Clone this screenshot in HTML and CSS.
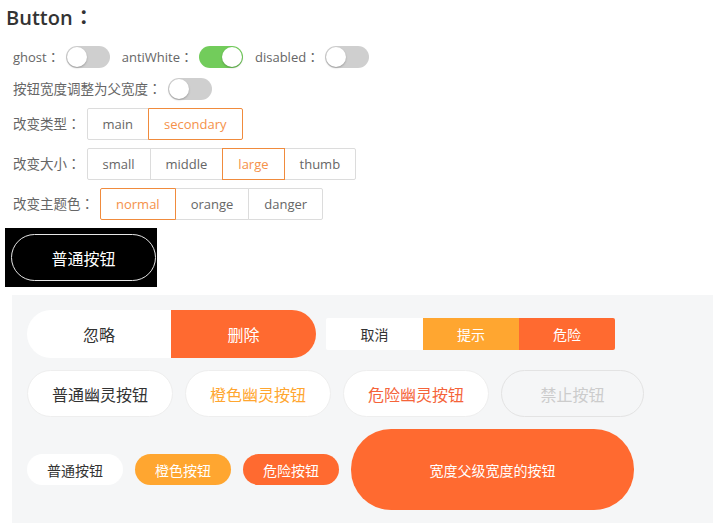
FILE: index.html
```html
<!DOCTYPE html>
<html lang="zh-CN">
<head>
<meta charset="utf-8">
<title>Button</title>
<link rel="stylesheet" href="styles.css">
</head>
<body>
<div class="page">
  <h2 class="title">Button<span class="colon">：</span></h2>

  <div class="opts">
    <div class="row toggles">
      <div class="opt"><span class="label latin">ghost<span class="colon">：</span></span><span class="switch"><span class="knob"></span></span></div>
      <div class="opt"><span class="label latin">antiWhite<span class="colon">：</span></span><span class="switch on"><span class="knob"></span></span></div>
      <div class="opt"><span class="label latin">disabled<span class="colon">：</span></span><span class="switch"><span class="knob"></span></span></div>
    </div>
    <div class="row toggles">
      <div class="opt"><span class="label">按钮宽度调整为父宽度<span class="colon">：</span></span><span class="switch"><span class="knob"></span></span></div>
    </div>

    <div class="row seg-row first">
      <span class="label">改变类型<span class="colon">：</span></span>
      <div class="seg">
        <span class="seg-btn">main</span>
        <span class="seg-btn active">secondary</span>
      </div>
    </div>
    <div class="row seg-row">
      <span class="label">改变大小<span class="colon">：</span></span>
      <div class="seg">
        <span class="seg-btn">small</span>
        <span class="seg-btn">middle</span>
        <span class="seg-btn active">large</span>
        <span class="seg-btn">thumb</span>
      </div>
    </div>
    <div class="row seg-row">
      <span class="label">改变主题色<span class="colon">：</span></span>
      <div class="seg">
        <span class="seg-btn active">normal</span>
        <span class="seg-btn">orange</span>
        <span class="seg-btn">danger</span>
      </div>
    </div>
  </div>

  <div class="dark-box">
    <button class="btn-anti">普通按钮</button>
  </div>

  <div class="panel">
    <div class="prow prow-a">
      <div class="pair">
        <button class="pair-btn pair-left">忽略</button>
        <button class="pair-btn pair-right">删除</button>
      </div>
      <div class="trio">
        <button class="trio-btn trio-white">取消</button>
        <button class="trio-btn trio-orange">提示</button>
        <button class="trio-btn trio-danger">危险</button>
      </div>
    </div>

    <div class="prow prow-b">
      <button class="ghost">普通幽灵按钮</button>
      <button class="ghost ghost-orange">橙色幽灵按钮</button>
      <button class="ghost ghost-danger">危险幽灵按钮</button>
      <button class="ghost ghost-disabled">禁止按钮</button>
    </div>

    <div class="prow prow-c">
      <button class="small">普通按钮</button>
      <button class="small small-orange">橙色按钮</button>
      <button class="small small-danger">危险按钮</button>
      <button class="big">宽度父级宽度的按钮</button>
    </div>
  </div>
</div>
</body>
</html>
```

FILE: styles.css
```css
* {
  box-sizing: border-box;
}

html, body {
  margin: 0;
  padding: 0;
  background: #fff;
}

body {
  font-family: "Open Sans", "Noto Sans CJK SC", sans-serif;
  color: #666;
}

.page {
  padding: 0 0 0 5px;
}

.title {
  margin: 0;
  padding: 3px 0 0 1px;
  height: 33px;
  font-size: 20px;
  line-height: 30px;
  font-weight: 600;
  color: #333;
}

.colon {
  display: inline-block;
  width: 1em;
  line-height: 1;
  text-align: center;
  font-family: "Noto Sans CJK TC", sans-serif;
}

.title .colon {
  margin-left: 1px;
}

.opts {
  padding-left: 8px;
  margin-top: 8px;
}

.row {
  display: flex;
  align-items: center;
}

.toggles {
  height: 32px;
}

.opt {
  display: flex;
  align-items: center;
  margin-right: 12px;
}

.label {
  font-size: 13.5px;
  line-height: 20px;
  color: #666;
  white-space: nowrap;
  margin-right: 6px;
}

.label.latin {
  font-size: 13px;
}

.switch {
  display: inline-flex;
  align-items: center;
  width: 44px;
  height: 22px;
  border-radius: 11px;
  background: #cfcfcf;
  padding: 1px;
}

.switch .knob {
  width: 20px;
  height: 20px;
  border-radius: 50%;
  background: #fff;
  box-shadow: 0 1px 2px rgba(0, 0, 0, 0.25);
}

.switch.on {
  background: #72cc5b;
  justify-content: flex-end;
}

.seg-row {
  height: 32px;
  margin-top: 8px;
}

.seg-row.first {
  margin-top: 3px;
}

.seg {
  display: flex;
}

.seg-btn {
  height: 32px;
  line-height: 30px;
  padding: 0 15px;
  border: 1px solid #dcdcdc;
  font-size: 13px;
  color: #666;
  background: #fff;
  margin-left: -1px;
}

.seg-btn:first-child {
  margin-left: 0;
  border-radius: 2px 0 0 2px;
}

.seg-btn:last-child {
  border-radius: 0 2px 2px 0;
}

.seg-btn.active {
  position: relative;
  z-index: 1;
  border-color: #f08b3d;
  color: #f5914a;
}

.dark-box {
  width: 152px;
  margin-top: 8px;
  padding: 6px 0 6px 6px;
  background: #000;
}

button {
  font-family: "Open Sans", "Noto Sans CJK SC", sans-serif;
  cursor: pointer;
  padding: 0;
  margin: 0;
}

.btn-anti {
  display: block;
  width: 145px;
  height: 47px;
  border: 1px solid #e6e6e6;
  border-radius: 24px;
  background: #000;
  color: #fff;
  font-size: 16px;
}

.panel {
  width: 701px;
  margin: 8px 0 0 7px;
  padding: 15px 0 13px 15px;
  background: #f5f6f7;
}

.prow {
  display: flex;
  align-items: center;
}

.pair {
  display: flex;
}

.pair-btn {
  height: 48px;
  border: none;
  font-size: 16px;
}

.pair-left {
  width: 144px;
  background: #fff;
  color: #333;
  border-radius: 24px 0 0 24px;
}

.pair-right {
  width: 145px;
  background: #ff6a30;
  color: #fff;
  border-radius: 0 24px 24px 0;
}

.trio {
  display: flex;
  margin-left: 10px;
}

.trio-btn {
  height: 32px;
  width: 96px;
  border: none;
  font-size: 14px;
  color: #fff;
}

.trio-white {
  width: 97px;
  background: #fff;
  color: #333;
  border-radius: 2px 0 0 2px;
}

.trio-orange {
  background: #ffa630;
}

.trio-danger {
  background: #ff6a30;
  border-radius: 0 2px 2px 0;
}

.prow-b {
  margin-top: 12px;
  gap: 12px;
}

.ghost {
  width: 146px;
  height: 47px;
  border: 1px solid #eeeeee;
  border-radius: 24px;
  background: #fff;
  color: #333;
  font-size: 16px;
}

.ghost-orange {
  color: #ffa630;
}

.ghost-danger {
  color: #f5643a;
}

.ghost-disabled {
  width: 143px;
  background: transparent;
  border-color: #e3e3e3;
  color: #cccccc;
}

.prow-c {
  margin-top: 12px;
  gap: 12px;
}

.small {
  width: 96px;
  height: 31px;
  border: none;
  border-radius: 16px;
  font-size: 14px;
  background: #fff;
  color: #333;
}

.small-orange {
  background: #ffa630;
  color: #fff;
}

.small-danger {
  background: #ff6a30;
  color: #fff;
}

.big {
  width: 283px;
  height: 81px;
  border: none;
  border-radius: 40px;
  background: #ff6a30;
  color: #fff;
  font-size: 14px;
}
```
